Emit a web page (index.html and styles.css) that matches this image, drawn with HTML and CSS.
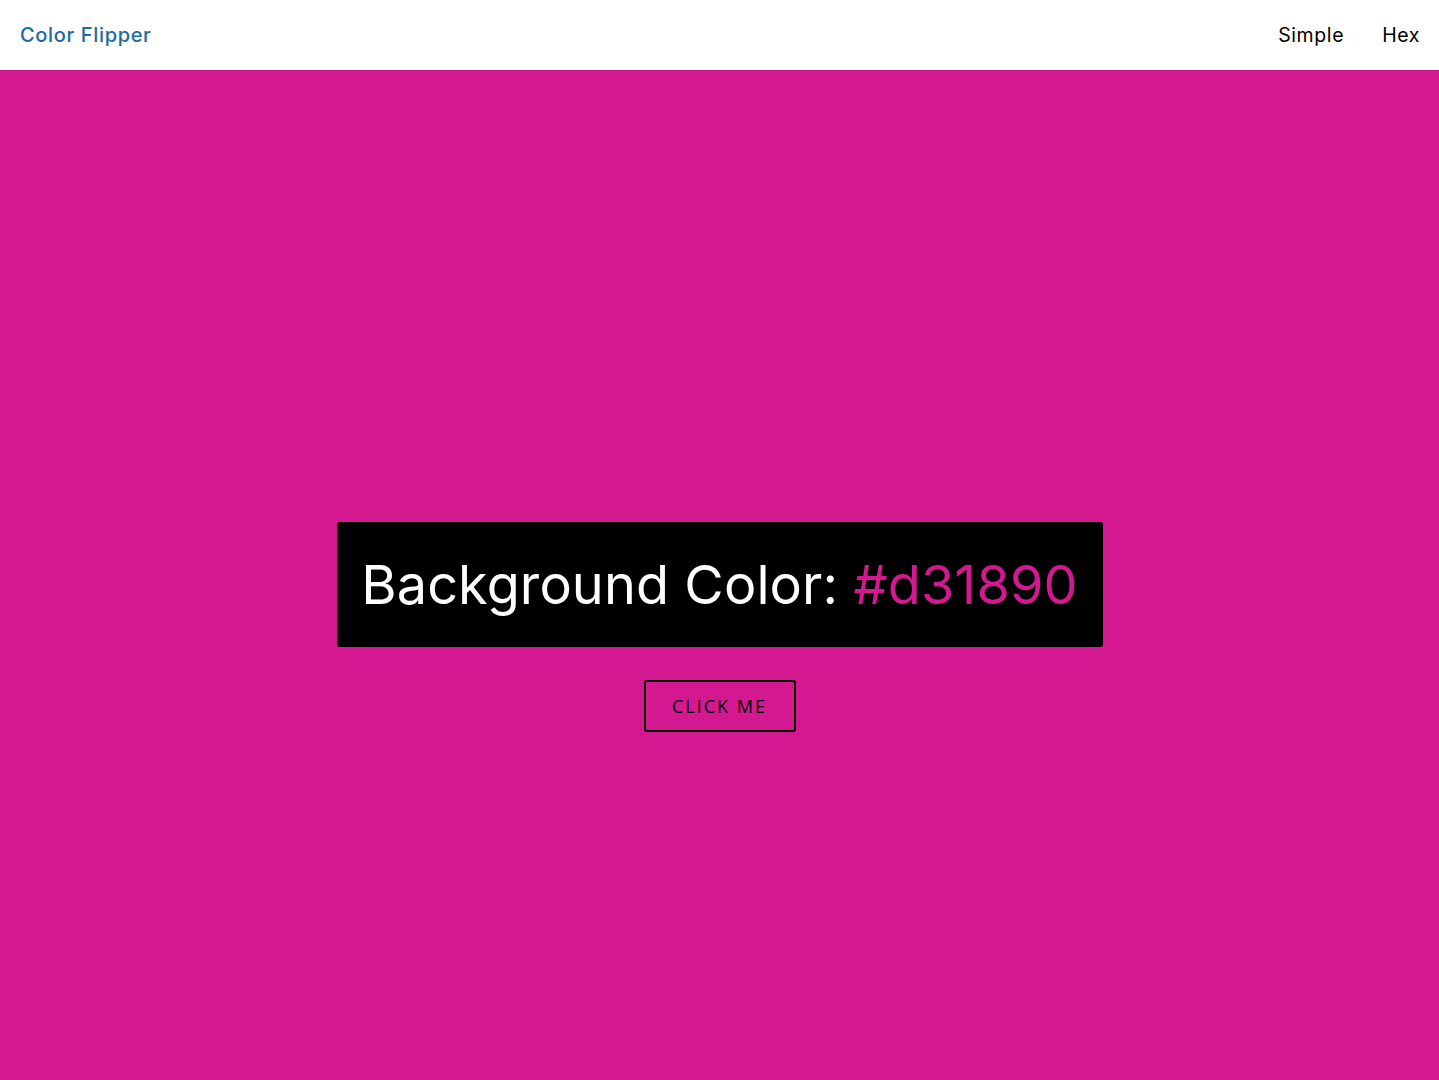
FILE: index.html
```html
<!DOCTYPE html>
<html lang="en">
<head>
<meta charset="utf-8">
<title>Color Flipper</title>
<link rel="stylesheet" href="styles.css">
</head>
<body>
<nav class="navbar">
  <h4 class="brand">Color Flipper</h4>
  <ul class="nav-links">
    <li><a href="#">Simple</a></li>
    <li><a href="#">Hex</a></li>
  </ul>
</nav>
<main class="main">
  <div class="container">
    <h2 class="color-box">Background Color: <span class="color">#d31890</span></h2>
    <button class="btn" type="button">Click me</button>
  </div>
</main>
</body>
</html>
```

FILE: styles.css
```css
* { box-sizing: border-box; margin: 0; padding: 0; }
html, body { height: 100%; }
body {
  font-family: Inter, "Noto Sans", sans-serif;
  background: #d31890;
  color: #000;
}
.navbar {
  height: 70px;
  background: #fff;
  display: flex;
  align-items: center;
  justify-content: space-between;
  padding: 0 19px 0 20px;
}
.brand {
  font-size: 20px;
  font-weight: 500;
  color: #1d6aa2;
  letter-spacing: 0.65px;
}
.nav-links {
  list-style: none;
  display: flex;
  gap: 38px;
}
.nav-links a {
  text-decoration: none;
  color: #000;
  font-size: 19.5px;
  font-weight: 400;
  letter-spacing: 0.6px;
}
.main {
  height: 1010px;
  display: flex;
  justify-content: center;
  padding-top: 452px;
}
.container {
  display: flex;
  flex-direction: column;
  align-items: center;
  gap: 33px;
}
.color-box {
  background: #000;
  color: #fff;
  width: 766px;
  height: 125px;
  border-radius: 3px;
  display: flex;
  align-items: center;
  justify-content: center;
  font-size: 54px;
  font-weight: 400;
  letter-spacing: 0.1px;
  white-space: pre;
}
.color { color: #d31890; }
.btn {
  width: 152px;
  height: 52px;
  background: transparent;
  border: 2px solid #000;
  border-radius: 3px;
  font-family: "Open Sans", "Noto Sans", sans-serif;
  font-size: 18px;
  font-weight: 500;
  text-transform: uppercase;
  letter-spacing: 2px;
  color: #000;
  cursor: pointer;
}
```
